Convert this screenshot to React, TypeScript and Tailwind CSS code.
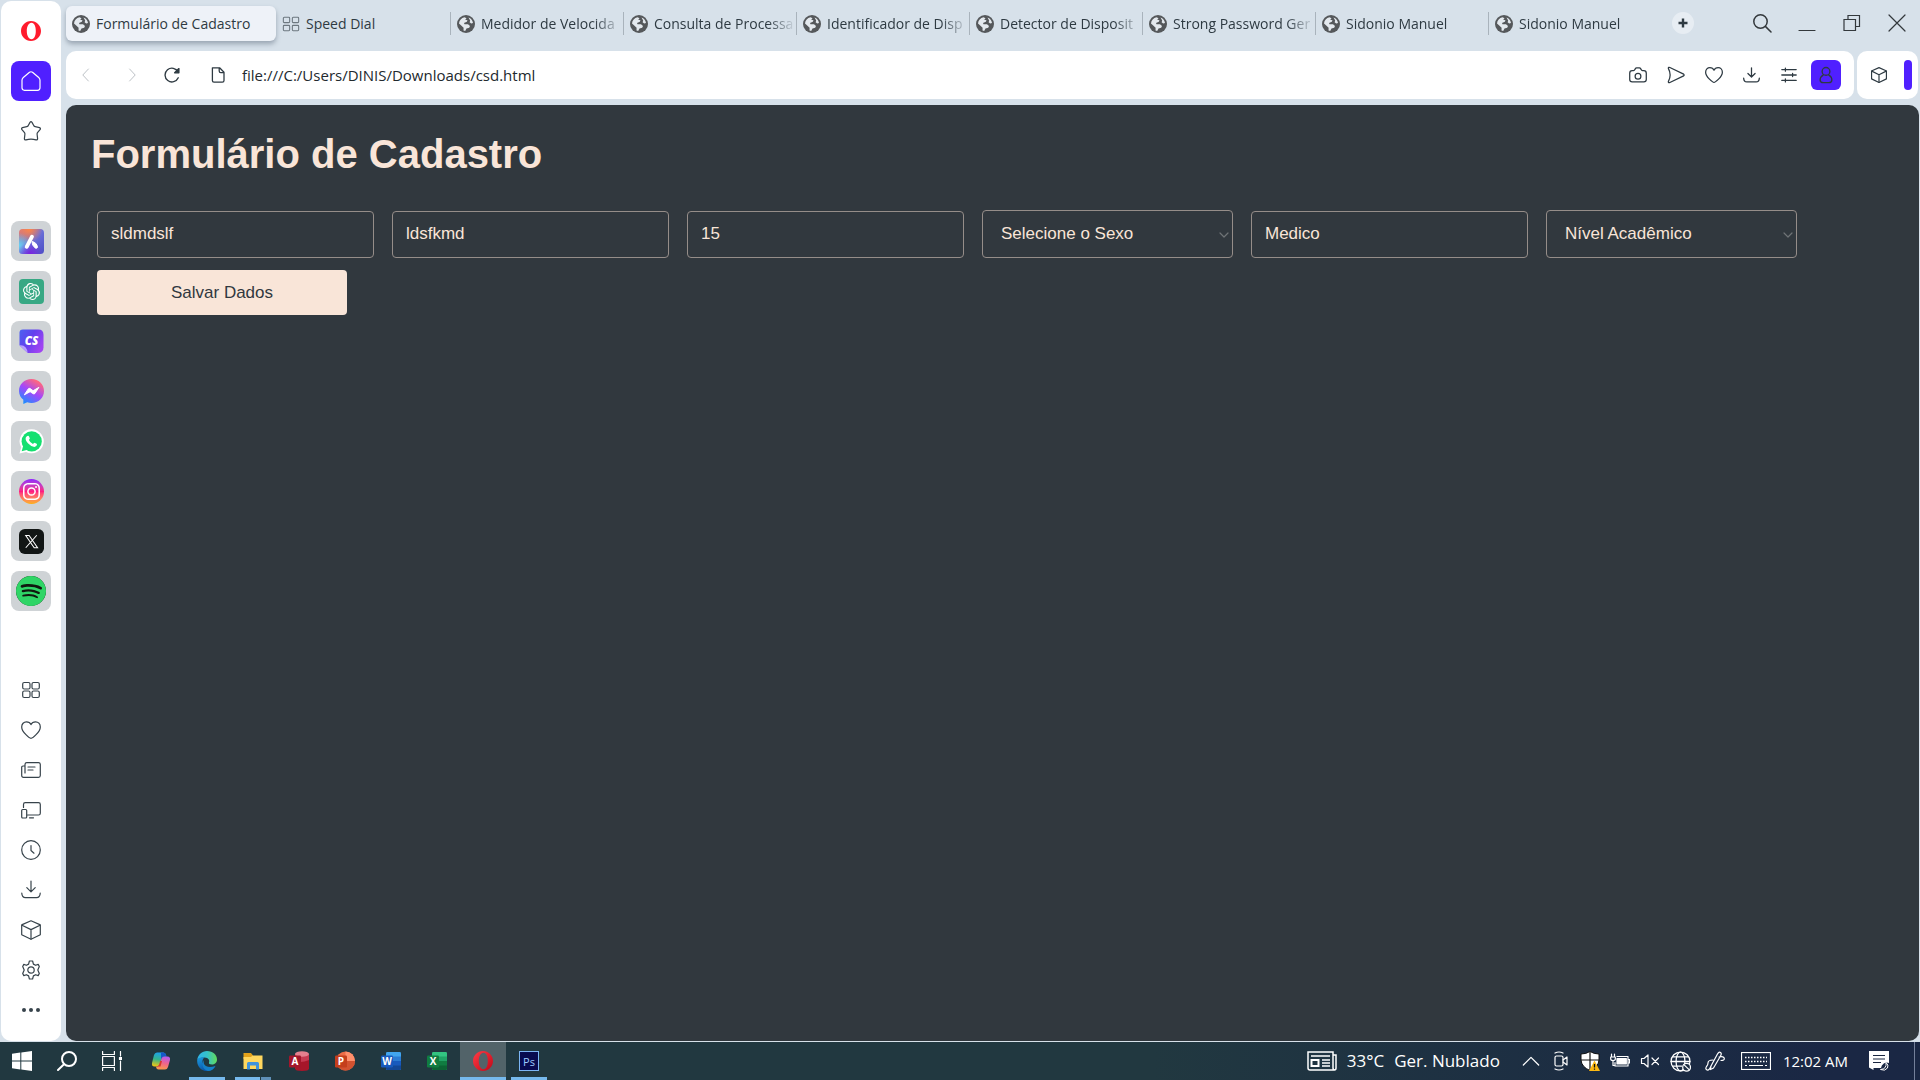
import type { ReactNode } from "react";
import { SiOpenai, SiInstagram, SiSpotify } from "react-icons/si";

const UI_FONT = "font-['Open_Sans','Noto_Sans',sans-serif]";
const PAGE_FONT = "font-['Liberation_Sans',Arial,sans-serif]";

function Line({ children, className = "size-5", width = 1.2 }: { children: ReactNode; className?: string; width?: number }) {
  return (
    <svg viewBox="0 0 20 20" className={className} fill="none" stroke="currentColor" strokeWidth={width} strokeLinecap="round" strokeLinejoin="round" aria-hidden="true">
      {children}
    </svg>
  );
}

function Globe() {
  return (
    <svg viewBox="0 0 18 18" className="size-[18px] shrink-0" aria-hidden="true">
      <circle cx="9" cy="9" r="9" fill="#55585b" />
      <path d="M2 8.500C2.200 5.200 4.500 2.800 7.500 2.200L9.500 3.200L8.200 4.800L10.500 5.200L9.800 6.800L7 8L7.500 9.200L11 9.300L13 11L12.200 12.800L9.500 13.600L8.200 16L6.500 15.500L6.600 12.800L4.500 10.800Z" fill="#e4e9ee" />
      <path d="M11.500 2.600Q15.200 4 16 8L14.200 8.600L12.600 7.200L13.200 5.400Z" fill="#e4e9ee" />
    </svg>
  );
}

const heart = <path d="M10 18.3C8.9 18.3 0.7 12.3 0.7 6.9C0.7 3.9 2.8 1.8 5.4 1.8C7.7 1.8 9.3 3 10 4.6C10.7 3 12.3 1.8 14.6 1.8C17.2 1.8 19.3 3.9 19.3 6.9C19.3 12.3 11.1 18.3 10 18.3Z" />;
const cube = (
  <>
    <path d="M10 0.8L18.8 4.6Q19.3 4.9 19.3 5.5V14.8L10 19.3L0.7 14.8V5.5Q0.7 4.9 1.2 4.6Z" />
    <path d="M1 5.2L10 9.6L19 5.2M10 9.6V19" />
  </>
);
const download = (
  <>
    <path d="M10 1V11.5M5.8 7.6L10 11.8L14.2 7.6" />
    <path d="M0.8 13.2Q1 17.6 4.5 17.6H15.5Q19 17.6 19.2 13.2" />
  </>
);

function OperaO({ className, id, from, to }: { className: string; id: string; from: string; to: string }) {
  return (
    <svg viewBox="0 0 20 20" className={className} aria-hidden="true">
      <defs>
        <linearGradient id={id} x1="0" y1="0" x2="1" y2="1">
          <stop offset="0" stopColor={from} />
          <stop offset="1" stopColor={to} />
        </linearGradient>
      </defs>
      <path fill={`url(#${id})`} fillRule="evenodd" d="M10 0C15.5 0 20 4.5 20 10S15.5 20 10 20S0 15.5 0 10S4.500 0 10 0ZM10.500 1.800C7.600 1.800 5.800 5.500 5.800 10S7.600 18.200 10.500 18.200S14.800 14.500 14.800 10S13.400 1.800 10.500 1.800Z" />
    </svg>
  );
}

function AriaLogo() {
  return (
    <svg viewBox="0 0 26 26" className="size-[25px]" aria-hidden="true">
      <defs>
        <linearGradient id="aria" x1="0" y1="0" x2="1" y2="1">
          <stop offset="0" stopColor="#e0787a" />
          <stop offset="0.5" stopColor="#6a6fd8" />
          <stop offset="1" stopColor="#4c4fc4" />
        </linearGradient>
        <radialGradient id="ariaTop" cx="0.4" cy="0" r="0.55">
          <stop offset="0" stopColor="#ff8546" />
          <stop offset="1" stopColor="#ff8546" stopOpacity="0" />
        </radialGradient>
        <radialGradient id="ariaLeft" cx="0" cy="0.65" r="0.5">
          <stop offset="0" stopColor="#63d3f5" />
          <stop offset="1" stopColor="#63d3f5" stopOpacity="0" />
        </radialGradient>
        <radialGradient id="ariaBottom" cx="0.45" cy="1" r="0.5">
          <stop offset="0" stopColor="#7a22e0" />
          <stop offset="1" stopColor="#7a22e0" stopOpacity="0" />
        </radialGradient>
      </defs>
      <rect width="26" height="26" rx="4" fill="url(#aria)" />
      <rect width="26" height="26" rx="4" fill="url(#ariaTop)" />
      <rect width="26" height="26" rx="4" fill="url(#ariaLeft)" />
      <rect width="26" height="26" rx="4" fill="url(#ariaBottom)" />
      <path d="M13.500 8L8 18.500" stroke="#fff" strokeWidth="4" strokeLinecap="round" />
      <path d="M13.500 13Q18.500 14 19.300 19Q18.500 21 16.500 19.500Q13.500 17 13.500 13Z" fill="#fff" stroke="#fff" />
    </svg>
  );
}

function ChatSonicLogo() {
  return (
    <svg viewBox="0 0 26 26" className="size-[25px]" aria-hidden="true">
      <defs>
        <linearGradient id="cs" x1="0" y1="0" x2="1" y2="0.6">
          <stop offset="0" stopColor="#4a63f0" />
          <stop offset="0.5" stopColor="#6340ee" />
          <stop offset="1" stopColor="#a044f2" />
        </linearGradient>
      </defs>
      <path d="M4 0.500H20Q25.500 0.500 25.500 6V19Q25.500 25 19 25H9L0.500 17V4Q0.500 0.500 4 0.500Z" fill="url(#cs)" />
      <path d="M0.500 17Q8 16 9 25Z" fill="#b9a0ff" />
      <text x="13" y="17" fill="#fff" fontSize="12" fontWeight="800" fontStyle="italic" textAnchor="middle" fontFamily="Open Sans, sans-serif">CS</text>
    </svg>
  );
}

function MessengerLogo() {
  return (
    <svg viewBox="0 0 26 26" className="size-[25px]" aria-hidden="true">
      <defs>
        <linearGradient id="msgr" x1="0.8" y1="0" x2="0.2" y2="1">
          <stop offset="0.1" stopColor="#ff6680" />
          <stop offset="0.5" stopColor="#a347fb" />
          <stop offset="1" stopColor="#1593ff" />
        </linearGradient>
      </defs>
      <path d="M13 0C20.400 0 26 5.400 26 12.500S20.400 25 13 25Q10.500 25 8.500 24.300L4.500 26V21.500C1.700 19.500 0 16.300 0 12.500C0 5.400 5.600 0 13 0Z" fill="url(#msgr)" />
      <path d="M5.500 16.500L9.600 10.300Q10.500 9.300 11.700 10L14.600 12.200L20.700 8.700L16.600 15Q15.700 16 14.500 15.200L11.600 13.200Z" fill="#fff" stroke="#fff" strokeLinejoin="round" />
    </svg>
  );
}

const apps: { name: string; icon: ReactNode }[] = [
  { name: "Aria", icon: <AriaLogo /> },
  { name: "ChatGPT", icon: <span className="grid size-[25px] place-items-center rounded bg-[#37a884] text-white"><SiOpenai className="size-[17px]" /></span> },
  { name: "ChatSonic", icon: <ChatSonicLogo /> },
  { name: "Messenger", icon: <MessengerLogo /> },
  {
    name: "WhatsApp",
    icon: (
      <svg viewBox="0 0 26 26" className="size-[25px]" aria-hidden="true">
        <path d="M13.300 0.300A12.500 12.500 0 1 1 7.300 23.800L0.500 25.600L2.300 19A12.500 12.500 0 0 1 13.300 0.300Z" fill="#fff" />
        <circle cx="13.200" cy="12.900" r="10.500" fill="#15e070" />
        <path d="M2.800 23.200L4.500 17L9 21.500Z" fill="#15e070" />
        <path d="M8.600 7.300Q10 6.500 10.600 8L11.300 9.900L10.300 11.500Q11.800 14.500 14.500 15.700L15.900 14.200Q18.500 15 18.800 15.800Q18.700 18.200 16 18.600Q12.500 18.500 9.300 14.900Q6.300 11.500 7 9Q7.500 7.800 8.600 7.300Z" fill="#fff" />
      </svg>
    ),
  },
  {
    name: "Instagram",
    icon: <span className="grid size-[25px] place-items-center rounded-full bg-linear-to-t from-[#ffb000] via-[#ff1a80] to-[#9020ff] text-white"><SiInstagram className="size-[17px]" /></span>,
  },
  {
    name: "X",
    icon: (
      <svg viewBox="0 0 26 26" className="size-[25px]" aria-hidden="true">
        <rect width="26" height="26" rx="6" fill="#121615" />
        <path d="M7 6.800H10.500L19.300 19.500H15.800ZM18.500 6.500L7 19.500" fill="none" stroke="#fff" strokeWidth="1.100" />
      </svg>
    ),
  },
  {
    name: "Spotify",
    icon: <span className="grid size-[30px] place-items-center rounded-full bg-[#10180f] text-[#2fd566]"><SiSpotify className="size-[30px]" /></span>,
  },
];

const tools: { name: string; icon: ReactNode }[] = [
  {
    name: "Espaços",
    icon: (
      <Line>
        <rect x="1.700" y="2.500" width="7.300" height="6.500" rx="1.500" />
        <rect x="11" y="2.500" width="7.300" height="6.500" rx="1.500" />
        <rect x="1.700" y="11" width="7.300" height="6.500" rx="1.500" />
        <rect x="11" y="11" width="7.300" height="6.500" rx="1.500" />
      </Line>
    ),
  },
  { name: "Favoritos", icon: <Line>{heart}</Line> },
  {
    name: "Notícias",
    icon: (
      <Line>
        <path d="M4 13V4.500Q4 2.700 5.800 2.700H17.500Q19.300 2.700 19.300 4.500V15.500Q19.300 17.300 17.500 17.300H2.500Q0.700 17.300 0.700 15.500V7Q0.700 6 2 6H4" />
        <path d="M7 7H14M7 10H12" />
      </Line>
    ),
  },
  {
    name: "Flow",
    icon: (
      <Line>
        <path d="M2.500 7.500V4.500Q2.500 2.700 4.300 2.700H17.500Q19.300 2.700 19.300 4.500V13.200Q19.300 15 17.500 15H6.500" />
        <rect x="0.700" y="9.500" width="5" height="8.500" rx="1" />
        <path d="M8.500 17.800H12.500" />
      </Line>
    ),
  },
  { name: "Histórico", icon: <Line><circle cx="10" cy="10" r="9.300" /><path d="M10 5.500V10.500L13 13.200" /></Line> },
  { name: "Downloads", icon: <Line>{download}</Line> },
  { name: "Extensões", icon: <Line>{cube}</Line> },
  {
    name: "Configurações",
    icon: (
      <Line>
        <path d="M8.400 1H11.600L12.400 4.100L14.600 5.300L17.200 4.400L18.300 6.500L16.800 10L18.300 13.500L17.200 15.600L14.600 14.700L12.400 15.900L11.600 19H8.400L7.600 15.900L5.400 14.700L2.800 15.600L1.700 13.500L3.200 10L1.700 6.500L2.800 4.400L5.400 5.300L7.600 4.100Z" />
        <circle cx="10" cy="10" r="3.200" />
      </Line>
    ),
  },
  {
    name: "Mais",
    icon: (
      <Line>
        <g fill="currentColor" stroke="none"><circle cx="3" cy="10" r="2" /><circle cx="10" cy="10" r="2" /><circle cx="17" cy="10" r="2" /></g>
      </Line>
    ),
  },
];

function Sidebar() {
  return (
    <aside className="my-px ml-px flex w-[60px] shrink-0 flex-col items-center rounded-[10px] bg-white pb-[11px] text-[#37434b]">
      <button type="button" aria-label="Opera" className="grid h-[60px] w-10 place-items-center">
        <OperaO className="size-5" id="operaSide" from="#ff1b2d" to="#ff1b2d" />
      </button>
      <button type="button" aria-label="Início" className="grid size-10 place-items-center rounded-lg bg-[#5020ff] text-white">
        <Line>
          <path d="M3.500 19.300Q1 19.300 1 16.800V9.200Q1 7.800 2 6.800L8.500 1.300Q10 0.200 11.500 1.300L18 6.800Q19 7.800 19 9.200V16.800Q19 19.300 16.500 19.300Z" />
        </Line>
      </button>
      <button type="button" aria-label="Marcadores" className="grid h-[60px] w-10 place-items-center">
        <Line>
          <path d="M9 1.400Q10 0 11 1.400L13 5Q13.500 5.600 14.200 5.700L18.500 6.600Q20 7.200 19 8.600L16.500 11.700Q16 12.400 16.100 13.200L16.600 17.600Q16.500 19.200 15 18.900Q10 17.200 5 18.900Q3.500 19.200 3.400 17.600L3.900 13.200Q4 12.400 3.500 11.700L1 8.600Q0 7.200 1.500 6.600L5.800 5.700Q6.500 5.600 7 5Z" />
        </Line>
      </button>
      <nav aria-label="Aplicativos" className="mt-[60px] flex flex-col gap-2.5">
        {apps.map((app) => (
          <button key={app.name} type="button" aria-label={app.name} className="grid size-10 place-items-center rounded-lg bg-[#cfd3d6]">
            {app.icon}
          </button>
        ))}
      </nav>
      <nav aria-label="Ferramentas" className="mt-auto flex flex-col">
        {tools.map((tool) => (
          <button key={tool.name} type="button" aria-label={tool.name} className="grid size-10 place-items-center">
            {tool.icon}
          </button>
        ))}
      </nav>
    </aside>
  );
}

const tabs = [
  "Medidor de Velocida",
  "Consulta de Processa",
  "Identificador de Disp",
  "Detector de Disposit",
  "Strong Password Ger",
  "Sidonio Manuel",
  "Sidonio Manuel",
];

function TabBar() {
  return (
    <div className={`flex h-[51px] items-start pt-1.5 text-sm text-[#2e3a42] ${UI_FONT}`}>
      <div role="tablist" className="flex min-w-0 items-center">
        <button type="button" role="tab" aria-selected="true" className="flex h-[35px] w-[210px] items-center gap-1.5 rounded-md bg-[#eef2f8] pl-1.5 shadow-[0_3px_5px_rgba(60,75,95,0.4)]">
          <Globe />
          <span className="whitespace-nowrap">Formulário de Cadastro</span>
        </button>
        <button type="button" role="tab" aria-selected="false" className="flex h-[35px] w-[174px] items-center gap-1.5 pl-1.5">
          <Line className="size-[18px] text-[#6d7880]">
            <rect x="1.500" y="2.500" width="7" height="6" rx="1" />
            <rect x="11.500" y="2.500" width="7" height="6" rx="1" />
            <rect x="1.500" y="11.500" width="7" height="6" rx="1" />
            <rect x="11.500" y="11.500" width="7" height="6" rx="1" />
          </Line>
          <span>Speed Dial</span>
        </button>
        {tabs.map((title, i) => (
          <button key={i} type="button" role="tab" aria-selected="false" className="flex h-[23px] w-[173px] items-center gap-1.5 border-l border-[#a9b3bc] pl-1.5">
            <Globe />
            <span className="min-w-0 flex-1 text-left whitespace-nowrap mask-r-from-80% mask-r-to-100%">{title}</span>
          </button>
        ))}
      </div>
      <button type="button" aria-label="Nova aba" className="mt-1.5 ml-[11px] grid size-[22px] place-items-center rounded-full bg-[#e7edf3]">
        <Line className="size-3" width={4}><path d="M10 2.500V17.500M2.500 10H17.500" strokeLinecap="butt" /></Line>
      </button>
      <div className="mt-[7px] mr-[13px] ml-auto flex items-center gap-[25px] text-[#33383c]">
        <button type="button" aria-label="Pesquisar abas"><Line className="size-5" width={1.5}><circle cx="8.500" cy="8.500" r="6.700" /><path d="M13.400 13.400L19 19" /></Line></button>
        <button type="button" aria-label="Minimizar"><Line className="size-5"><path d="M2 17.500H18" /></Line></button>
        <button type="button" aria-label="Restaurar"><Line className="size-5"><path d="M2 6.500H13.500V17.500H2ZM6 6.500V2.500H17.500V13.500H13.500" strokeLinejoin="miter" /></Line></button>
        <button type="button" aria-label="Fechar"><Line className="size-5"><path d="M2 2L18 18M18 2L2 18" /></Line></button>
      </div>
    </div>
  );
}

function AddressBar() {
  return (
    <div className="flex h-12 gap-[3px] pr-0.5 text-[#2e3a42]">
      <div className="flex min-w-0 flex-1 items-center rounded-[10px] bg-white pr-[13px] pl-3">
        <button type="button" aria-label="Voltar" className="text-[#b9bec3]"><Line className="size-4"><path d="M13 2.500L6 10L13 17.500" /></Line></button>
        <button type="button" aria-label="Avançar" className="ml-[30px] text-[#b9bec3]"><Line className="size-4"><path d="M7 2.500L14 10L7 17.500" /></Line></button>
        <button type="button" aria-label="Recarregar" className="ml-6">
          <Line className="size-4" width={1.7}><path d="M17.800 13.500A8.600 8.600 0 1 1 17.600 6.200" /><path d="M18.600 2V7.300H13.300Z" fill="currentColor" /></Line>
        </button>
        <Line className="ml-[30px] size-4 shrink-0" width={1.6}>
          <path d="M3 1H12L17.500 6.500V17Q17.500 19 15.500 19H5Q3 19 3 17ZM11.500 1V5Q11.500 7 13.500 7H17.500" />
        </Line>
        <input aria-label="Endereço" defaultValue="file:///C:/Users/DINIS/Downloads/csd.html" className={`ml-4 min-w-0 flex-1 bg-transparent text-[15px] text-[#22292e] outline-none ${UI_FONT}`} />
        <div className="flex items-center gap-5">
          <button type="button" aria-label="Captura"><Line className="size-[18px]" width={1.4}><path d="M3.500 5.200H5Q6 5.200 6.500 4L7 3Q7.500 2.200 8.500 2.200H11.500Q12.500 2.200 13 3L13.500 4Q14 5.200 15 5.200H16.500Q19.200 5.200 19.200 8V15Q19.200 17.700 16.500 17.700H3.500Q0.800 17.700 0.800 15V8Q0.800 5.200 3.500 5.200Z" /><circle cx="10" cy="11.300" r="3.200" /></Line></button>
          <button type="button" aria-label="Enviar"><Line className="size-[18px]" width={1.4}><path d="M1.500 2.600Q1.500 1 3.200 1.700L18.500 9Q19.500 10 18.500 11L3.200 18.300Q1.500 19 1.500 17.400Q5.500 10 1.500 2.600Z" /></Line></button>
          <button type="button" aria-label="Favoritar"><Line className="size-[18px]" width={1.4}>{heart}</Line></button>
          <button type="button" aria-label="Baixar"><Line className="size-[17px]" width={1.5}>{download}</Line></button>
          <button type="button" aria-label="Ajustes"><Line className="size-[18px]" width={1.4}><path d="M2 4H18M2 10H18M2 16H18M6 2.300V5.700M14 8.300V11.700M6 14.300V17.700" /></Line></button>
          <button type="button" aria-label="Perfil" className="-ml-[7px] grid size-[30px] place-items-center rounded-md bg-[#5020ff]">
            <Line className="size-[18px]" width={1.5}><circle cx="10" cy="6" r="4.300" /><path d="M7 9.800Q3.500 12 3.500 15.500Q3.500 18.500 7 18.500H13Q16.500 18.500 16.500 15.500Q16.500 12 13 9.800" /></Line>
          </button>
        </div>
      </div>
      <div className="flex w-[61px] items-center justify-between rounded-[10px] bg-white pr-1.5 pl-3.5">
        <button type="button" aria-label="Extensões"><Line className="size-4" width={1.5}>{cube}</Line></button>
        <span className="h-[30px] w-2 rounded bg-[#5020ff]" />
      </div>
    </div>
  );
}

const FIELD = "rounded border border-[#958d89] bg-transparent text-[17px] text-[#f9e5d8] outline-none";

function TextField({ label, value }: { label: string; value: string }) {
  return <input type="text" aria-label={label} defaultValue={value} className={`h-[47px] w-[277px] px-[13px] pb-0.5 ${FIELD}`} />;
}

function SelectField({ label, options }: { label: string; options: string[] }) {
  return (
    <div className="relative">
      <select aria-label={label} className={`h-12 w-[251px] appearance-none px-[18px] ${FIELD}`}>
        <option>{label}</option>
        {options.map((o) => <option key={o}>{o}</option>)}
      </select>
      <Line className="pointer-events-none absolute top-5 right-1 size-2.5 text-[#6f7376]" width={2.400}><path d="M2 6L10 14L18 6" /></Line>
    </div>
  );
}

function Page() {
  return (
    <main className={`mt-1.5 mr-px mb-px flex-1 rounded-[10px] bg-[#31383e] px-[25px] pt-[25px] ${PAGE_FONT}`}>
      <h1 className="text-[40px] leading-12 font-bold text-[#f9e5d8]">Formulário de Cadastro</h1>
      <form className="mt-8 flex flex-wrap items-end gap-x-[18px] gap-y-3 px-1.5" onSubmit={(e) => e.preventDefault()}>
        <TextField label="Nome" value="sldmdslf" />
        <TextField label="Sobrenome" value="ldsfkmd" />
        <TextField label="Idade" value="15" />
        <SelectField label="Selecione o Sexo" options={["Masculino", "Feminino"]} />
        <TextField label="Profissão" value="Medico" />
        <SelectField label="Nível Acadêmico" options={["Médio", "Superior"]} />
        <button type="submit" className="h-[45px] w-[250px] rounded bg-[#f9e5d8] text-[17px] text-[#31383f]">Salvar Dados</button>
      </form>
    </main>
  );
}

function OfficeIcon({ letter, tile, back, round = false }: { letter: string; tile: string; back: string[]; round?: boolean }) {
  return (
    <svg viewBox="0 0 20 20" className="size-5" aria-hidden="true">
      {round ? (
        <>
          <circle cx="10.500" cy="10" r="9.500" fill={back[0]} />
          <path d="M10.500 0.500A9.500 9.500 0 0 1 20 10H10.500Z" fill={back[1]} />
          <path d="M1 10H20A9.500 9.500 0 0 1 1 10Z" fill={back[2]} />
        </>
      ) : (
        <>
          <rect x="5" y="1" width="15" height="18" rx="1.200" fill={back[0]} />
          <path d="M5 5.500H20V10H5Z" fill={back[1]} />
          <path d="M5 10H20V18Q20 19 19 19H6Q5 19 5 18Z" fill={back[2]} />
          <path d="M5 14.500H20V18Q20 19 19 19H6Q5 19 5 18Z" fill="#000" fillOpacity="0.200" />
        </>
      )}
      <rect x="0" y="4.500" width="12" height="12" rx="1.200" fill={tile} />
      <text x="6" y="14.200" fill="#fff" fontSize="10" fontWeight="700" textAnchor="middle" fontFamily="Open Sans, sans-serif">{letter}</text>
    </svg>
  );
}

const pinned: { name: string; icon: ReactNode; state?: "open" | "multi" | "active" }[] = [
  {
    name: "Copilot",
    icon: (
      <svg viewBox="0 0 20 20" className="size-5" aria-hidden="true">
        <defs>
          <linearGradient id="cpA" x1="0.5" y1="0" x2="0.3" y2="1"><stop offset="0" stopColor="#1ba0ee" /><stop offset="0.5" stopColor="#35b58a" /><stop offset="1" stopColor="#f2c811" /></linearGradient>
          <linearGradient id="cpB" x1="0.6" y1="0" x2="0.4" y2="1"><stop offset="0" stopColor="#b45cf0" /><stop offset="0.5" stopColor="#f0648c" /><stop offset="1" stopColor="#fb9a4a" /></linearGradient>
        </defs>
        <path d="M6 1.500H12.500Q14.500 1.500 15 4L15.500 5.500H13Q11 5.500 10.500 7.500L8.500 13.500Q8 15.500 5.500 15.500H3.500Q0.500 15.500 1 12L3 4Q3.800 1.500 6 1.500Z" fill="url(#cpA)" />
        <path d="M10 1.500H12.500Q14.500 1.500 15 4L15.500 5.500H13Q11 5.500 10.500 7.500L10 9Z" fill="#1758c8" />
        <path d="M14 18.500H7.500Q5.500 18.500 5 16L4.800 15.500H6Q8 15.500 8.700 13L10.500 7.500Q11 5.500 13.500 5.500H16.500Q19.500 5.500 19 9L17 16Q16.200 18.500 14 18.500Z" fill="url(#cpB)" />
        <path d="M9 10L11 10L9.500 15.500H5Q8 15.500 8.700 12Z" fill="#d83b2a" />
      </svg>
    ),
  },
  {
    name: "Edge",
    state: "open",
    icon: (
      <svg viewBox="0 0 20 20" className="size-5" aria-hidden="true">
        <defs>
          <linearGradient id="edA" x1="0" y1="0.3" x2="1" y2="0.3"><stop offset="0" stopColor="#2fb4ea" /><stop offset="0.5" stopColor="#35c1c9" /><stop offset="1" stopColor="#62dc5a" /></linearGradient>
          <linearGradient id="edB" x1="0" y1="0" x2="0.5" y2="1"><stop offset="0" stopColor="#1a9be0" /><stop offset="1" stopColor="#0b50a4" /></linearGradient>
        </defs>
        <path d="M0.200 9C1 3.500 5 0 10 0C16 0 20 4 20 8.500C20 12 17.500 13.500 15 13.500C12.500 13.500 11.500 12.500 12 11.500C12.500 10.500 12.500 7.500 9 6.800C5 6 1.500 7.500 0.200 9Z" fill="url(#edA)" />
        <path d="M0.200 9C1.500 6.500 4.500 5.700 7.500 6.500C4.500 8.500 5 12.500 8 15C11.500 17.500 16 17 18.500 15C17 18 14 20 10 20C4.500 20-0.300 15.500 0.200 9Z" fill="url(#edB)" />
        <path d="M7.500 8.500C5 13 8.500 18 18.500 15C17 18 14 20 11 20C5.500 19 4 12 7.500 8.500Z" fill="#1480c8" />
      </svg>
    ),
  },
  {
    name: "Explorador",
    state: "multi",
    icon: (
      <svg viewBox="0 0 20 20" className="size-5" aria-hidden="true">
        <path d="M0.500 2H8L10 4.500V8H0.500Z" fill="#e3a21a" />
        <path d="M0.500 6H8L9.500 4.500H19.500V18H0.500Z" fill="#ffd75e" />
        <path d="M4 18.500V12.500Q4 11 5.500 11H14.500Q16 11 16 12.500V18.500H13V14.500H7V18.500Z" fill="#3f93dd" />
      </svg>
    ),
  },
  {
    name: "Access",
    icon: (
      <svg viewBox="0 0 20 20" className="size-5" aria-hidden="true">
        <path d="M6 3V17.500Q6 20 13 20T20 17.500V3Z" fill="#a6162a" />
        <path d="M6 3V10Q12 12.500 20 9V3Z" fill="#c53a52" />
        <ellipse cx="13" cy="3" rx="7" ry="2.800" fill="#e4808f" />
        <rect y="4.500" width="12" height="12" rx="1.200" fill="#a2162b" />
        <text x="6" y="14.200" fill="#fff" fontSize="10" fontWeight="700" textAnchor="middle" fontFamily="Open Sans, sans-serif">A</text>
      </svg>
    ),
  },
  { name: "PowerPoint", icon: <OfficeIcon letter="P" tile="#c43e1c" back={["#ed6c47", "#ff8f6b", "#d35230"]} round /> },
  { name: "Word", icon: <OfficeIcon letter="W" tile="#185abd" back={["#41a5ee", "#2b7cd3", "#185abd"]} /> },
  { name: "Excel", icon: <OfficeIcon letter="X" tile="#107c41" back={["#33c481", "#21a366", "#107c41"]} /> },
  { name: "Opera", state: "active", icon: <OperaO className="size-5" id="operaTask" from="#ff3b45" to="#c00818" /> },
  { name: "Photoshop", state: "open", icon: <span className={`grid size-5 place-items-center border border-[#7cb5f5] bg-[#080b50] text-[11px] leading-none text-[#9ccbff] ${UI_FONT}`}>Ps</span> },
];

function StateBar({ state }: { state: "open" | "multi" | "active" }) {
  if (state === "active") return <span className="absolute inset-x-0 bottom-0 h-[3px] bg-[#76b9ed]" />;
  if (state === "open") return <span className="absolute inset-x-[5px] bottom-0 h-[3px] bg-[#76b9ed]" />;
  return (
    <span className="absolute inset-x-[5px] bottom-0 flex h-[3px] gap-px">
      <span className="flex-1 bg-[#76b9ed]" />
      <span className="w-2.5 bg-[#5f90b8]" />
    </span>
  );
}

function Taskbar() {
  return (
    <footer className={`flex h-[38px] shrink-0 items-stretch bg-linear-to-r from-[#213840] from-60% to-[#1a2744] to-95% text-white ${UI_FONT}`}>
      <button type="button" aria-label="Iniciar" className="grid w-11 place-items-center">
        <svg viewBox="0 0 20 20" className="size-5" fill="#fff" aria-hidden="true"><path d="M0 2.800L8.300 1.600V9.500H0ZM9.300 1.400L20 0V9.500H9.300ZM0 10.500H8.300V18.400L0 17.200ZM9.300 10.500H20V20L9.300 18.600Z" /></svg>
      </button>
      <button type="button" aria-label="Pesquisar" className="grid w-[46px] place-items-center">
        <Line className="size-5" width={2}><circle cx="12" cy="8" r="7" /><path d="M7 13.200L1 19" /></Line>
      </button>
      <button type="button" aria-label="Visão de tarefas" className="mr-1 grid w-11 place-items-center">
        <Line className="size-5" width={1.2}><path d="M0.600 0.500V3.500H12.400V0.500M0.600 19.500V16.500H12.400V19.500M0.600 5.500H12.400V14.500H0.600ZM18.500 0.500V5M18.500 10V19.500" /><rect x="17.500" y="6.500" width="2" height="2" fill="#fff" /></Line>
      </button>
      {pinned.map((app) => (
        <button key={app.name} type="button" aria-label={app.name} className={`relative grid w-[46px] place-items-center ${app.state === "active" ? "bg-[#526369]" : ""}`}>
          {app.icon}
          {app.state && <StateBar state={app.state} />}
        </button>
      ))}
      <div className="ml-auto flex items-center">
        <button type="button" className="flex items-center gap-2.5 text-[17px] whitespace-nowrap">
          <svg viewBox="0 0 30 20" className="h-5 w-[30px]" fill="none" stroke="#fff" strokeWidth="1.500" aria-hidden="true">
            <path d="M1 1H26V17Q26 19 28 19H3Q1 19 1 17ZM26 4H29V17Q29 19 27.500 19" />
            <path d="M4 5H23M15 9H23M15 12H23M15 15H23" />
            <rect x="4.500" y="9" width="7" height="6" strokeWidth="2" />
          </svg>
          <span>33°C</span>
          <span>Ger. Nublado</span>
        </button>
        <div className="ml-[22px] flex items-center gap-2.5">
          <Line className="size-[18px]" width={1.4}><path d="M1.500 14.500L10 6L18.500 14.500" /></Line>
          <Line className="size-5" width={1.200}><rect x="5" y="5" width="8" height="10" rx="1.500" /><path d="M13 9L17 6V14L13 11M5 2Q9 0 13 2M5 18Q9 20 13 18" /></Line>
          <svg viewBox="0 0 20 20" className="size-5" aria-hidden="true">
            <path d="M10 0.500Q14 3 19 3V9Q18.500 16 10 19.500Q1.500 16 1 9V3Q6 3 10 0.500Z" fill="#fff" stroke="#111" />
            <path d="M10 1V19M1 9H19" stroke="#111" strokeWidth="1.200" />
            <path d="M14.500 9.500L20 20H9Z" fill="#fdb913" />
            <path d="M14.500 13V16.500M14.500 17.500V18.700" stroke="#111" strokeWidth="1.300" />
          </svg>
          <Line className="size-5" width={1.200}><path d="M1.500 3V6M4.500 3V6M0.700 6H5.300V8Q5.300 9.500 3 9.500Q0.700 9.500 0.700 8ZM3 9.500V14.500H5M7 5.500H18V15H5V11.500" /><path d="M18.500 8.500H19.500V12H18.500" /><rect x="7" y="7.500" width="9.300" height="5.500" fill="#fff" /></Line>
          <Line className="size-5" width={1.200}><path d="M1.500 7.500H4L8 4V16L4 12.500H1.500ZM12 7L18.500 13.500M18.500 7L12 13.500" /></Line>
          <Line className="size-[21px]" width={1.200}><circle cx="10" cy="10" r="9" /><ellipse cx="10" cy="10" rx="4.200" ry="9" /><path d="M1 10H19M2.500 5.500H17.500M2.500 14.500H11" /><circle cx="15.800" cy="15.500" r="3.700" fill="#1c2c42" /><path d="M13.200 13L18.400 18" /></Line>
          <Line className="ml-1 size-5" width={1.200}><path d="M6 15L12.500 3Q14 0.500 15.500 1.500T15.500 5L8.500 17L5.500 18.500ZM14 6Q19 5 19.300 7.500Q19.500 9.500 16 9.500M8 9Q3 9 3 12Q3 14 1.500 15.500Q0 18 2 19Q4.500 19.500 6 15" /></Line>
        </div>
        <svg viewBox="0 0 30 18" className="ml-4 h-[18px] w-[30px]" fill="none" stroke="#fff" aria-hidden="true">
          <rect x="0.500" y="0.500" width="29" height="17" strokeWidth="1.200" />
          <path d="M4 5.500H26M4 9.500H26" strokeWidth="1.500" strokeDasharray="1.500 1.500" />
          <path d="M4 13.500H6M8 13.500H22M24 13.500H26" strokeWidth="1.200" />
        </svg>
        <time className="ml-3 text-[15px] whitespace-nowrap">12:02 AM</time>
        <button type="button" aria-label="Notificações" className="ml-[21px]">
          <svg viewBox="0 0 20 20" className="size-5" aria-hidden="true">
            <path d="M0 0H20V12A6 6 0 0 0 12 17H4.500V19L0 16.500Z" fill="#fff" />
            <path d="M4 4.500H16M4 8H16M4 11.500H12" stroke="#1b2742" strokeWidth="1.200" />
            <path d="M17 11.500Q20 14 18.500 17Q16 20.500 11.500 18.500Q18 18 17 11.500Z" fill="#1b2742" stroke="#fff" />
          </svg>
        </button>
        <span className="mr-[5px] ml-[25px] h-[38px] w-px bg-[#74809a]" />
      </div>
    </footer>
  );
}

export default function App() {
  return (
    <div className="flex min-h-screen flex-col bg-[#d7e1ea]">
      <div className="flex flex-1">
        <Sidebar />
        <div className="ml-[5px] flex min-w-0 flex-1 flex-col">
          <TabBar />
          <AddressBar />
          <Page />
        </div>
      </div>
      <Taskbar />
    </div>
  );
}
